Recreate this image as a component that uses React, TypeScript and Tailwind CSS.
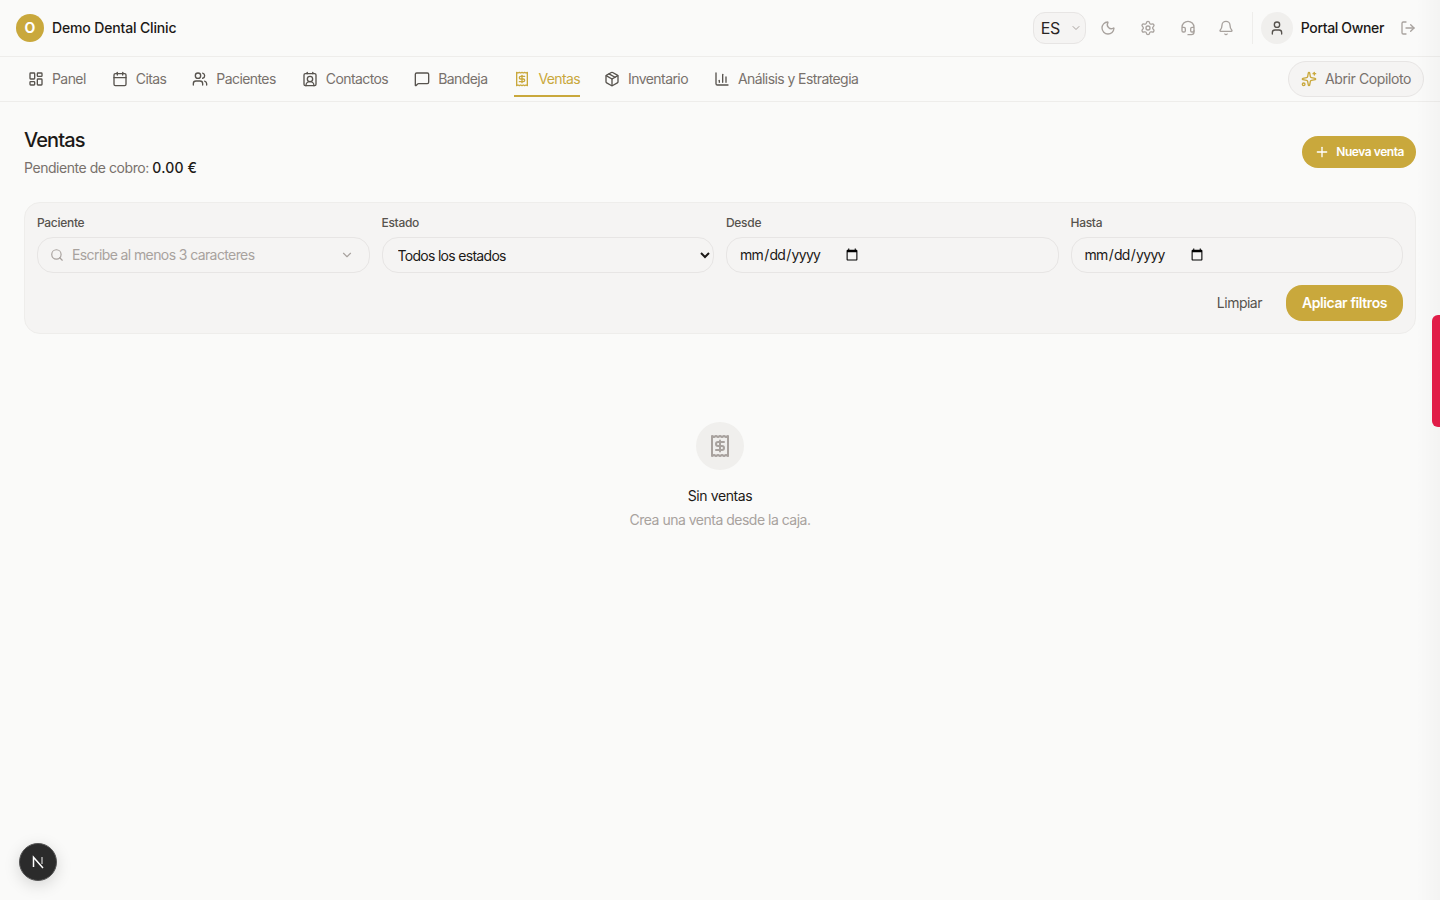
import React from 'react';
import {
  LayoutDashboard,
  Calendar,
  Users,
  ContactRound,
  MessageSquare,
  Package,
  ChartColumn,
  Sparkles,
  Moon,
  Settings,
  Headset,
  Bell,
  User,
  LogOut,
  Plus,
  Search,
  ChevronDown,
} from 'lucide-react';

function ReceiptIcon({ className }: { className?: string }) {
  return (
    <svg viewBox="0 0 24 24" fill="none" stroke="currentColor" strokeWidth="2" strokeLinecap="round" strokeLinejoin="round" className={className}>
      <path d="M4 2v20l2-1 2 1 2-1 2 1 2-1 2 1 2-1 2 1V2l-2 1-2-1-2 1-2-1-2 1-2-1-2 1Z" />
      <path d="M16 8h-6a2 2 0 1 0 0 4h4a2 2 0 1 1 0 4H8" />
      <path d="M12 17.5v-11" />
    </svg>
  );
}

function NextLogo() {
  return (
    <svg viewBox="0 0 18 18" fill="none" className="h-[18px] w-[18px]">
      <path d="M4.5 14V4.2L14 15" stroke="white" strokeWidth="1.5" />
      <path d="M13 4v7" stroke="#bbbbbb" strokeWidth="1.4" />
    </svg>
  );
}

const navItems = [
  { label: 'Panel', icon: LayoutDashboard },
  { label: 'Citas', icon: Calendar },
  { label: 'Pacientes', icon: Users },
  { label: 'Contactos', icon: ContactRound },
  { label: 'Bandeja', icon: MessageSquare },
  { label: 'Ventas', icon: ReceiptIcon, active: true },
  { label: 'Inventario', icon: Package },
  { label: 'Análisis y Estrategia', icon: ChartColumn },
];

export default function App() {
  return (
    <div className="relative min-h-[900px] overflow-hidden bg-[#fafaf9] font-['Inter',sans-serif] text-[#1c1917]">
      <header className="flex h-[57px] items-center justify-between border-b border-[#eeedeb] pl-4 pr-6">
        <div className="flex items-center gap-2">
          <div className="flex h-7 w-7 items-center justify-center rounded-full bg-[#c9a83c] text-sm font-bold text-white">O</div>
          <span className="text-sm font-medium tracking-[-0.15px]">Demo Dental Clinic</span>
        </div>
        <div className="flex items-center">
          <div className="flex h-8 w-[53px] items-center justify-between rounded-xl border border-[#e7e5e4] bg-[#f5f4f3] pl-[7px] pr-[3px]">
            <span className="text-base tracking-[-0.3px] text-[#292524]">ES</span>
            <ChevronDown className="h-3 w-3 text-[#a8a29e]" />
          </div>
          <div className="ml-[14px] flex items-center gap-6 text-[#a8a29e]">
            <Moon className="h-4 w-4" />
            <Settings className="h-4 w-4" />
            <Headset className="h-4 w-4" />
            <Bell className="-ml-0.5 h-4 w-4" />
          </div>
          <div className="ml-[18px] h-8 border-l border-[#eeedeb]" />
          <div className="ml-2 flex h-8 w-8 items-center justify-center rounded-full bg-[#f0efed]">
            <User className="h-4 w-4 text-[#57534e]" />
          </div>
          <span className="ml-2 text-sm font-medium tracking-[-0.35px]">Portal Owner</span>
          <LogOut className="ml-4 h-4 w-4 text-[#a8a29e]" />
        </div>
      </header>

      <nav className="flex h-[45px] items-center justify-between border-b border-[#eeedeb] px-4">
        <div className="flex items-center gap-1">
          {navItems.map((item) => {
            const Icon = item.icon;
            return (
              <div
                key={item.label}
                className={
                  item.active
                    ? 'ml-[13px] mr-2 flex h-9 items-center gap-2 border-y-2 border-t-transparent border-b-[#c9a83c] text-sm tracking-[-0.6px] text-[#c9a83c]'
                    : 'mx-[10px] flex h-9 items-center gap-2 border-y-2 border-transparent text-sm tracking-[-0.58px] text-[#78716c]'
                }
              >
                <Icon className={item.active ? 'h-4 w-4' : 'ml-[2px] h-4 w-4 text-[#57534e]'} />
                <span>{item.label}</span>
              </div>
            );
          })}
        </div>
        <button className="flex h-9 items-center gap-2 rounded-full border border-[#e7e5e4] bg-[#f5f4f3] px-3 text-sm tracking-[-0.4px] text-[#78716c]">
          <Sparkles className="h-4 w-4 text-[#c9a83c]" />
          Abrir Copiloto
        </button>
      </nav>

      <main className="px-6 pt-6">
        <div className="flex items-center justify-between">
          <div>
            <h1 className="text-xl font-medium leading-7 tracking-[-0.9px]">Ventas</h1>
            <p className="mt-1 text-sm tracking-[-0.45px] text-[#78716c]">
              Pendiente de cobro: <span className="font-medium tracking-[0.2px] text-[#1c1917]">0.00 €</span>
            </p>
          </div>
          <button className="flex h-8 items-center gap-[6px] rounded-full bg-[#c9a83c] px-3 text-xs font-semibold tracking-[-0.45px] text-white">
            <Plus className="h-4 w-4" />
            Nueva venta
          </button>
        </div>

        <section className="mt-6 rounded-2xl border border-[#eeedeb] bg-[#f5f4f3] p-3">
          <div className="grid grid-cols-4 gap-3">
            <div>
              <label className="mb-[6px] block text-xs font-medium leading-4 tracking-[-0.3px] text-[#57534e]">Paciente</label>
              <div className="flex h-9 items-center justify-between rounded-2xl border border-[#e7e5e4] pl-3 pr-[15px]">
                <div className="flex items-center gap-2">
                  <Search className="h-[14px] w-[14px] text-[#a8a29e]" />
                  <span className="text-sm tracking-[-0.6px] text-[#a8a29e]">Escribe al menos 3 caracteres</span>
                </div>
                <ChevronDown className="h-[14px] w-[14px] text-[#a8a29e]" />
              </div>
            </div>
            <div>
              <label className="mb-[6px] block text-xs font-medium leading-4 tracking-[-0.3px] text-[#57534e]">Estado</label>
              <select className="h-9 w-full rounded-2xl border border-[#e7e5e4] pl-[11px] pr-3 text-sm tracking-[-0.7px] text-[#1c1917]">
                <option>Todos los estados</option>
              </select>
            </div>
            <div>
              <label className="mb-[6px] block text-xs font-medium leading-4 tracking-[-0.3px] text-[#57534e]">Desde</label>
              <input type="date" className="h-9 w-full rounded-2xl border border-[#e7e5e4] px-3 text-sm tracking-[-0.7px] text-[#1c1917] [&::-webkit-calendar-picker-indicator]:mr-[185px]" />
            </div>
            <div>
              <label className="mb-[6px] block text-xs font-medium leading-4 tracking-[-0.3px] text-[#57534e]">Hasta</label>
              <input type="date" className="h-9 w-full rounded-2xl border border-[#e7e5e4] px-3 text-sm tracking-[-0.7px] text-[#1c1917] [&::-webkit-calendar-picker-indicator]:mr-[184px]" />
            </div>
          </div>
          <div className="mt-3 flex items-center justify-end gap-6">
            <button className="text-sm tracking-[-0.5px] text-[#57534e]">Limpiar</button>
            <button className="flex h-9 w-[117px] items-center justify-center rounded-2xl bg-[#c9a83c] text-sm font-semibold tracking-[-0.4px] text-white">
              Aplicar filtros
            </button>
          </div>
        </section>

        <div className="mt-[88px] flex flex-col items-center">
          <div className="flex h-12 w-12 items-center justify-center rounded-full bg-[#f0efed]">
            <ReceiptIcon className="h-6 w-6 text-[#a8a29e]" />
          </div>
          <p className="mt-4 text-sm tracking-[-0.4px]">Sin ventas</p>
          <p className="mt-1 text-sm tracking-[-0.5px] text-[#a8a29e]">Crea una venta desde la caja.</p>
        </div>
      </main>

      <div className="pointer-events-none absolute inset-y-0 right-0 w-6 bg-gradient-to-l from-black/[0.025] to-transparent" />
      <div className="absolute right-0 top-[315px] h-[112px] w-2 rounded-l-md bg-[#e11d48]" />
      <div className="absolute bottom-[19px] left-[19px] flex h-[38px] w-[38px] items-center justify-center rounded-full border border-[#555] bg-[#2b2b2b] shadow-[0_4px_16px_rgba(0,0,0,0.15)]">
        <NextLogo />
      </div>
    </div>
  );
}
